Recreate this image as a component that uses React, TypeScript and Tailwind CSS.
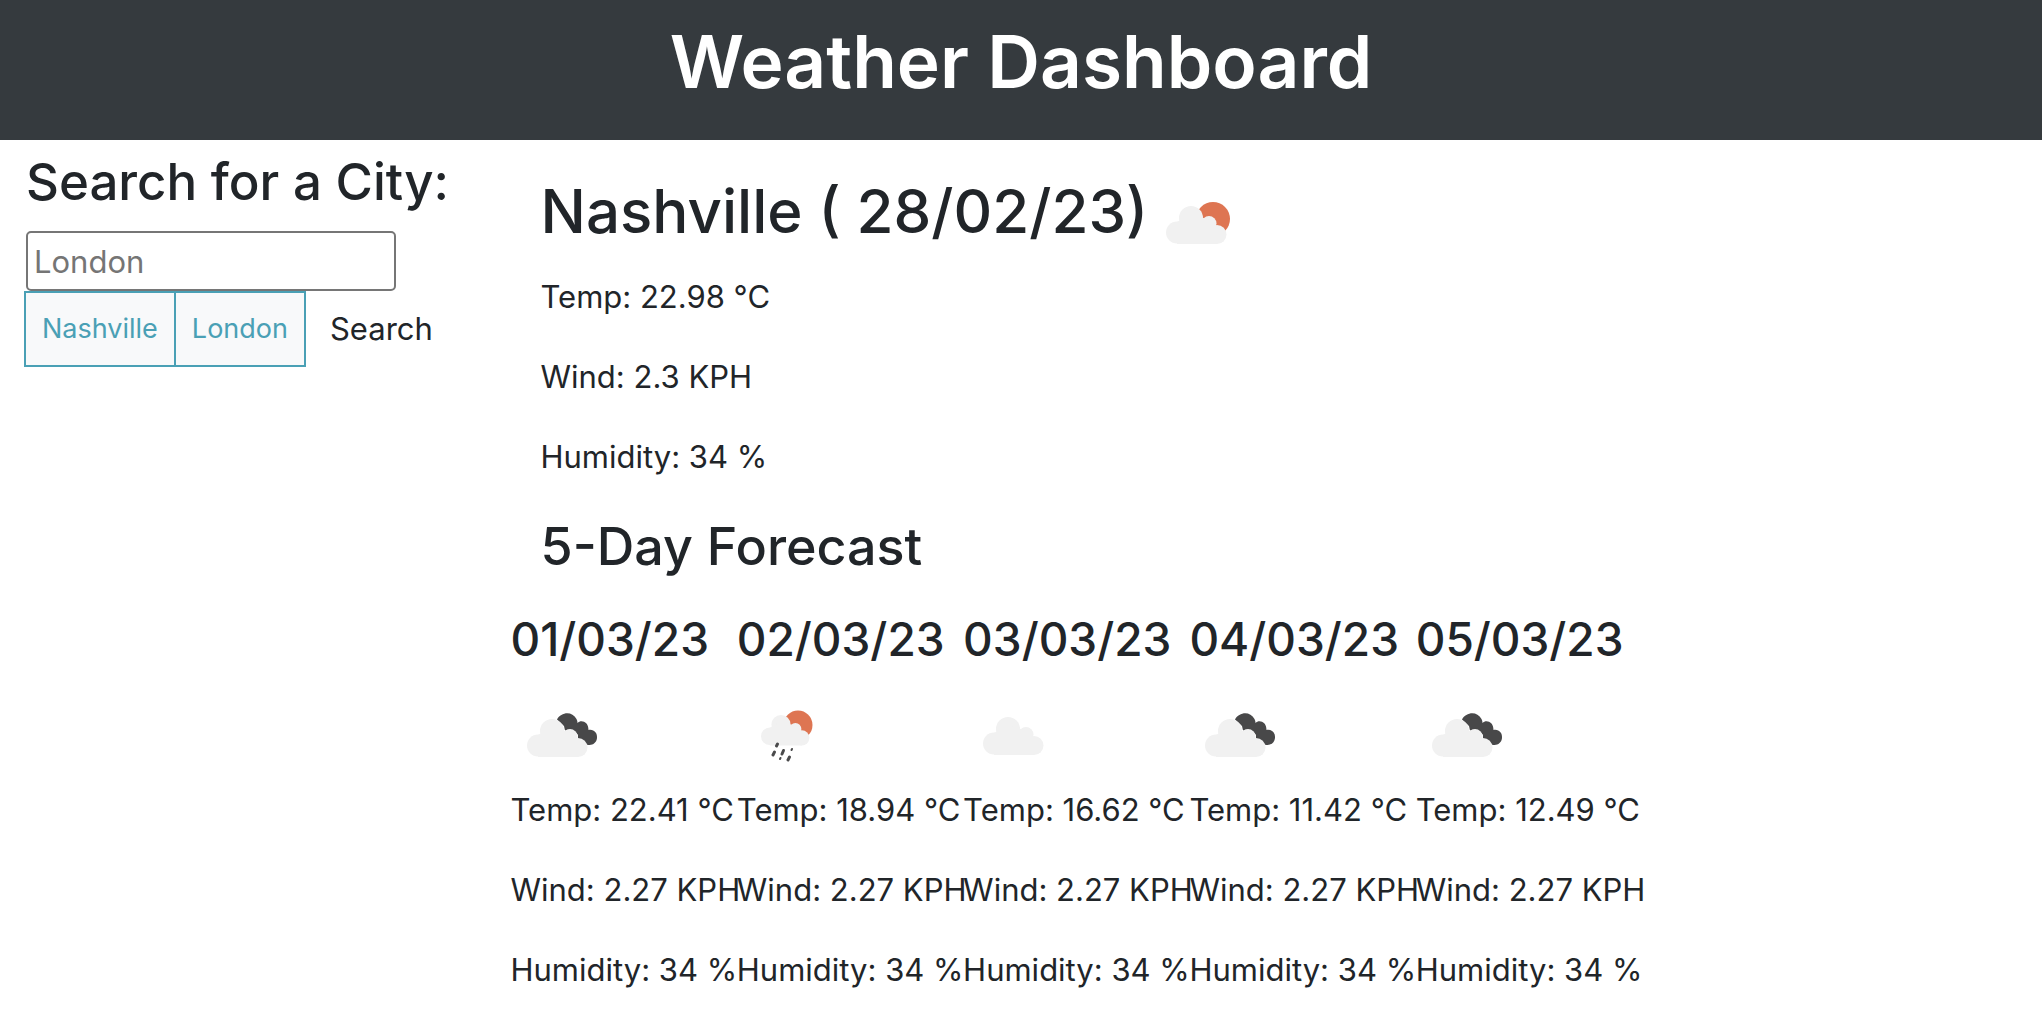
import React from "react";

type Sky = "few" | "broken" | "rain" | "cloud";

function Cloud() {
  return (
    <g fill="#f1f1f1">
      <circle cx="11" cy="26.500" r="11" />
      <circle cx="25" cy="12" r="12" />
      <circle cx="43" cy="17.500" r="7.500" />
      <circle cx="51" cy="28.500" r="9.500" />
      <path d="M11 16 L25 8 L44 14 L51 28 V38 H11 Z" />
    </g>
  );
}

function WeatherIcon({ sky, label }: { sky: Sky; label: string }) {
  return (
    <svg role="img" aria-label={label} viewBox="0 0 100 100" className="block h-[100px] w-[100px] shrink-0">
      {sky === "few" && (
        <>
          <circle cx="65" cy="46" r="17" fill="#de7552" />
          <g transform="translate(18 33)"><Cloud /></g>
        </>
      )}
      {sky === "broken" && (
        <>
          <path
            d="M46 35.500 C50 28 61 26.500 65.500 35 Q66.500 37 66.500 39 C70 35.500 77.500 37.500 77.500 46 C83 45 86.500 49 86 54 C85.500 60 79 63 74 59.500 L67 55 V51 C64 46 58 45 54 46.500 L53 42 Q50 39 46 35.500 Z"
            fill="#484849"
          />
          <g transform="translate(16 35)"><Cloud /></g>
        </>
      )}
      {sky === "rain" && (
        <>
          <circle cx="61" cy="41" r="14.500" fill="#de7552" />
          <g transform="translate(24 31) scale(0.800)"><Cloud /></g>
          <g stroke="#4a4a4b" strokeWidth="3" strokeLinecap="round">
            <path d="M40.500 60 L39.500 62" />
            <path d="M37.500 68 L36 71" />
            <path d="M46.500 66.500 L45 70" />
            <path d="M55 65 L54.500 66" strokeWidth="2" />
            <path d="M43.500 74 L43 75" strokeWidth="2" />
            <path d="M52.500 73 L51 76" />
          </g>
        </>
      )}
      {sky === "cloud" && <g transform="translate(20 33)"><Cloud /></g>}
    </svg>
  );
}

const forecast: { date: string; sky: Sky; label: string; temp: string }[] = [
  { date: "01/03/23", sky: "broken", label: "Broken clouds", temp: "22.41" },
  { date: "02/03/23", sky: "rain", label: "Rain", temp: "18.94" },
  { date: "03/03/23", sky: "cloud", label: "Scattered clouds", temp: "16.62" },
  { date: "04/03/23", sky: "broken", label: "Broken clouds", temp: "11.42" },
  { date: "05/03/23", sky: "broken", label: "Broken clouds", temp: "12.49" },
];

function Readings({ temp, wind, humidity }: { temp: string; wind: string; humidity: string }) {
  return (
    <div className="flex flex-col gap-8 text-[31px] leading-[48px] whitespace-nowrap">
      <p>Temp: {temp} °C</p>
      <p>Wind: {wind} KPH</p>
      <p>Humidity: {humidity} %</p>
    </div>
  );
}

export default function App() {
  return (
    <div className="min-h-screen bg-white font-['Inter',sans-serif] text-[#212529]">
      <header className="bg-[#353a3e] pt-3.5 pb-[30px] text-center text-white">
        <h1 className="text-[73px] leading-[96px] font-semibold">Weather Dashboard</h1>
      </header>
      <div className="flex">
        <aside className="w-1/4 shrink-0 pt-2 pl-6">
          <form onSubmit={(e) => e.preventDefault()}>
            <label htmlFor="city" className="block pl-[2px] text-[51px] leading-[68px] font-medium whitespace-nowrap">
              Search for a City:
            </label>
            <input
              id="city"
              type="text"
              placeholder="London"
              className="mt-[15px] ml-[2px] block h-[60px] w-[370px] rounded-[5px] border-2 border-[#767676] px-[6px] text-[31px] placeholder:text-[#757575]"
            />
            <div className="flex items-stretch">
              <div className="flex border-2 border-[#4aa0b5] bg-[#f8f9fa] text-[27px] leading-[40px] text-[#4aa0b5]">
                <button type="button" className="border-r-2 border-[#4aa0b5] px-4 py-4">Nashville</button>
                <button type="button" className="px-4 py-4">London</button>
              </div>
              <button type="submit" className="px-6 text-[31px] leading-[48px]">Search</button>
            </div>
          </form>
        </aside>
        <main className="min-w-0 flex-1">
          <section className="pt-[33px] pl-[30px]">
            <div className="flex h-[100px] items-start">
              <h2 className="text-[60px] leading-[77px] font-medium whitespace-nowrap">Nashville ( 28/02/23)</h2>
              <WeatherIcon sky="few" label="Few clouds" />
            </div>
            <Readings temp="22.98" wind="2.3" humidity="34" />
            <h2 className="mt-8 text-[52px] leading-[67px] font-medium">5-Day Forecast</h2>
          </section>
          <section className="mr-[400px] grid grid-cols-5 pt-[30px]">
            {forecast.map((day) => (
              <article key={day.date}>
                <h3 className="mb-4 text-[46px] leading-[58px] font-medium whitespace-nowrap">{day.date}</h3>
                <div className="mb-0.5">
                  <WeatherIcon sky={day.sky} label={day.label} />
                </div>
                <Readings temp={day.temp} wind="2.27" humidity="34" />
              </article>
            ))}
          </section>
        </main>
      </div>
    </div>
  );
}
